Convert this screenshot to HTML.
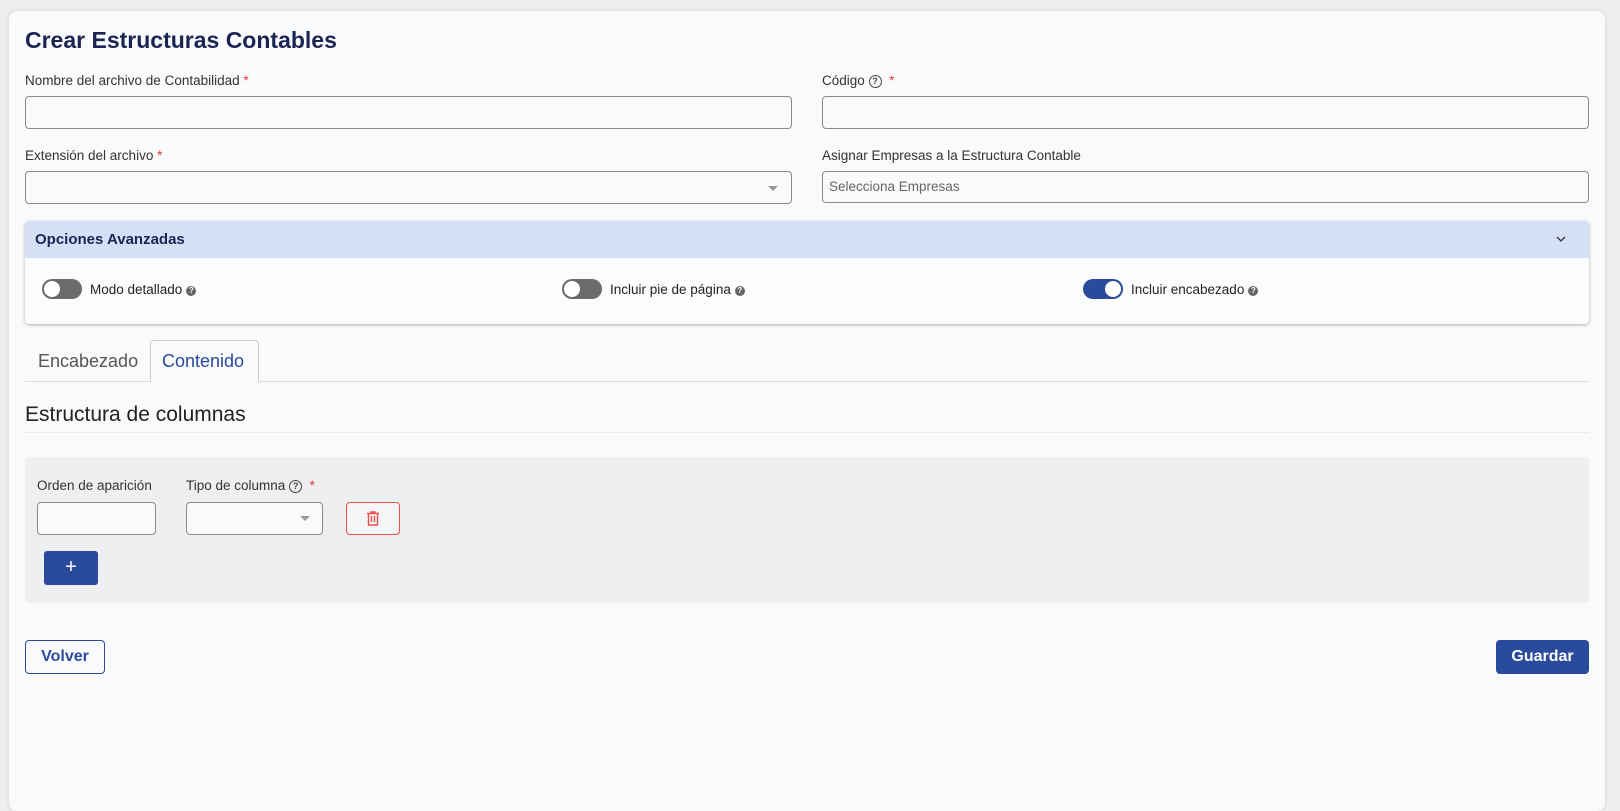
<!DOCTYPE html>
<html><head><meta charset="utf-8"><style>
*{box-sizing:border-box;margin:0;padding:0}
body{width:1620px;height:774px;background:#eceeef;font-family:"Liberation Sans",sans-serif;color:#333;position:relative;overflow:hidden}
.card{position:absolute;left:9px;top:11px;width:1596px;height:800px;background:#f9fafb;border-radius:8px;box-shadow:0 0 4px rgba(0,0,0,.12)}
.a{position:absolute}
.lbl{font-size:13.5px;color:#333;white-space:nowrap}
.req{color:#e53935}
.inp{position:absolute;border:1px solid #8a8a8a;border-radius:4px;background:#f9fafb;height:33px}
.q{display:inline-block;width:13px;height:13px;border:1.3px solid #444;border-radius:50%;font-size:9px;text-align:center;line-height:10.5px;vertical-align:1px;font-weight:bold;color:#444}
.arrow{position:absolute;width:0;height:0;border-left:5px solid transparent;border-right:5px solid transparent;border-top:5px solid #999}
.tog{position:absolute;width:40px;height:20px;border-radius:10px;background:#6b6b6b}
.tog::after{content:"";position:absolute;left:2px;top:2px;width:16px;height:16px;border-radius:50%;background:#fff}
.tog.on{background:#2a4a9c}
.tog.on::after{left:22px}
.qi{display:inline-block;width:10px;height:10px;border-radius:50%;background:#666;color:#fff;font-size:8px;text-align:center;line-height:10px;font-weight:bold;vertical-align:1px;margin-left:4px}
.tl{position:absolute;font-size:13.5px;color:#222}
</style></head><body>
<div class="card"></div>
<div class="a" style="left:25px;top:27px;font-size:23px;font-weight:bold;color:#1b2452">Crear Estructuras Contables</div>

<div class="a lbl" style="left:25px;top:73px">Nombre del archivo de Contabilidad <span class="req">*</span></div>
<div class="inp" style="left:25px;top:96px;width:767px"></div>
<div class="a lbl" style="left:822px;top:73px">Código <span class="q">?</span> &nbsp;<span class="req">*</span></div>
<div class="inp" style="left:822px;top:96px;width:767px"></div>

<div class="a lbl" style="left:25px;top:148px">Extensión del archivo <span class="req">*</span></div>
<div class="inp" style="left:25px;top:171px;width:767px"></div>
<div class="arrow" style="left:768px;top:186px"></div>
<div class="a lbl" style="left:822px;top:148px">Asignar Empresas a la Estructura Contable</div>
<div class="inp" style="left:822px;top:171px;width:767px;height:32px"></div>
<div class="a" style="left:829px;top:179px;font-size:13.5px;color:#666">Selecciona Empresas</div>

<div class="a" style="left:25px;top:221px;width:1564px;height:103px;background:#fbfcfd;border-radius:4px;box-shadow:0 1px 3px rgba(0,0,0,.3)"></div>
<div class="a" style="left:25px;top:221px;width:1564px;height:37px;background:#d5dff5;border-radius:4px 4px 0 0"></div>
<div class="a" style="left:35px;top:231px;font-size:15px;font-weight:bold;color:#1b2452">Opciones Avanzadas</div>
<svg class="a" style="left:1556px;top:235px" width="10" height="8"><path d="M1 2l4 4 4-4" stroke="#333" stroke-width="1.3" fill="none"/></svg>
<div class="tog" style="left:42px;top:279px"></div>
<div class="tl" style="left:90px;top:282px">Modo detallado<span class="qi">?</span></div>
<div class="tog" style="left:562px;top:279px"></div>
<div class="tl" style="left:610px;top:282px">Incluir pie de página<span class="qi">?</span></div>
<div class="tog on" style="left:1083px;top:279px"></div>
<div class="tl" style="left:1131px;top:282px">Incluir encabezado<span class="qi">?</span></div>

<div class="a" style="left:25px;top:381px;width:1564px;height:1px;background:#dcdcdc"></div>
<div class="a" style="left:38px;top:351px;font-size:18px;color:#555">Encabezado</div>
<div class="a" style="left:150px;top:340px;width:109px;height:42px;border:1px solid #ccc;border-bottom:none;border-radius:4px 4px 0 0;background:#f9fafb"></div>
<div class="a" style="left:162px;top:351px;font-size:18px;color:#2a4a9c">Contenido</div>

<div class="a" style="left:25px;top:403px;font-size:21px;color:#222">Estructura de columnas</div>
<div class="a" style="left:25px;top:432px;width:1564px;height:1px;background:#ececec"></div>

<div class="a" style="left:25px;top:457px;width:1564px;height:146px;background:#eeeff0;border-radius:4px"></div>
<div class="a lbl" style="left:37px;top:478px">Orden de aparición</div>
<div class="inp" style="left:37px;top:502px;width:119px"></div>
<div class="a lbl" style="left:186px;top:478px">Tipo de columna <span class="q">?</span> &nbsp;<span class="req">*</span></div>
<div class="inp" style="left:186px;top:502px;width:137px"></div>
<div class="arrow" style="left:300px;top:516px"></div>
<div class="a" style="left:346px;top:502px;width:54px;height:33px;border:1px solid #f0524a;border-radius:4px;background:#f5f6f8"></div>
<svg class="a" style="left:366px;top:511px" width="14" height="15"><path d="M1 2.5h12M5 2.5V1h4v1.5M2.5 2.5V14h9V2.5M5.5 5v6M8.5 5v6" stroke="#f0524a" stroke-width="1.4" fill="none"/></svg>
<div class="a" style="left:44px;top:551px;width:54px;height:34px;background:#2a4a9c;border-radius:3px;color:#fff;font-size:20px;text-align:center;line-height:32px">+</div>

<div class="a" style="left:25px;top:640px;width:80px;height:34px;border:1.3px solid #2a4a9c;border-radius:4px;color:#2a4a9c;font-size:16px;font-weight:bold;text-align:center;line-height:31px">Volver</div>
<div class="a" style="left:1496px;top:640px;width:93px;height:34px;background:#2a4a9c;border-radius:4px;color:#fff;font-size:16px;font-weight:bold;text-align:center;line-height:34px">Guardar</div>
</body></html>
